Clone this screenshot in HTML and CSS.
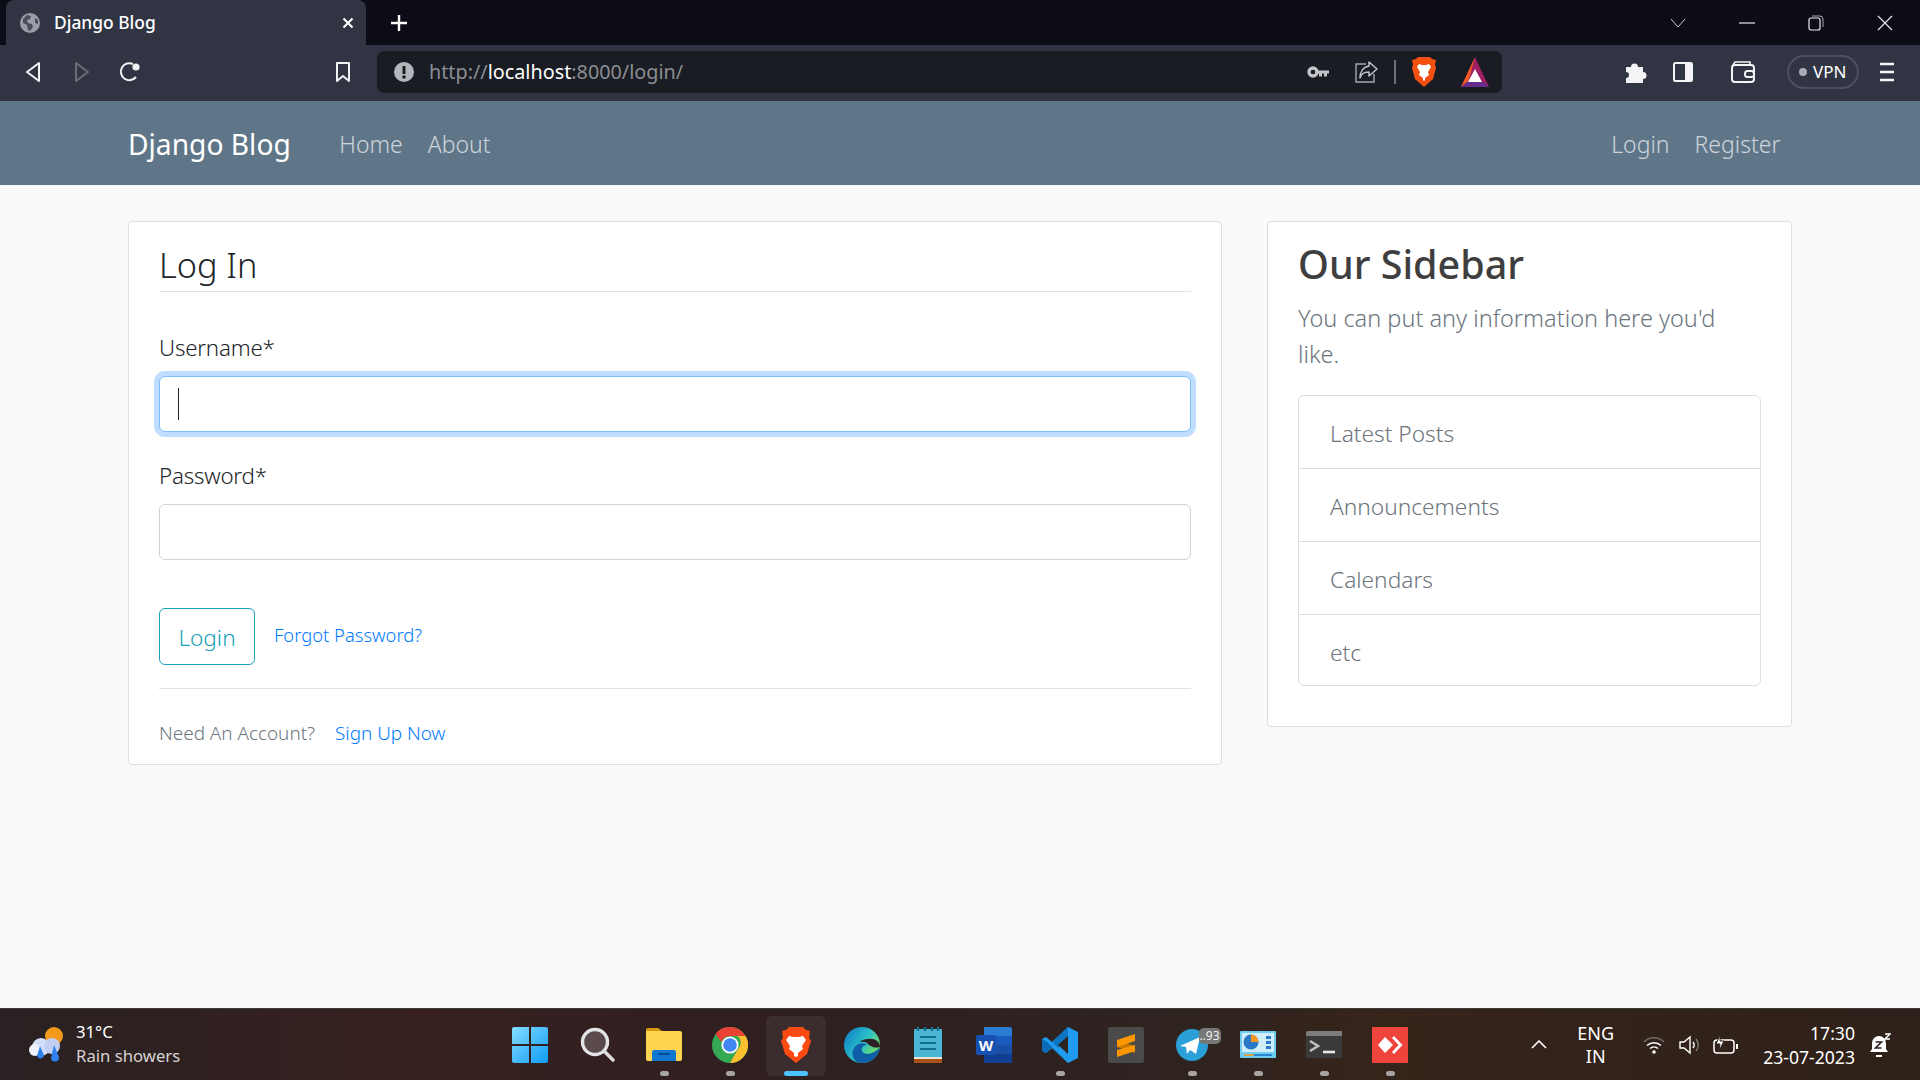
FILE: index.html
```html
<!DOCTYPE html>
<html>
<head>
<meta charset="utf-8"/>
<title>Django Blog</title>
<link rel="stylesheet" href="styles.css">
</head>
<body>

<!-- browser tab strip -->
<div class="tabstrip">
  <div class="tab">
    <svg class="favicon" width="20" height="20" viewBox="0 0 20 20"><circle cx="10" cy="10" r="10" fill="#9a9ea8"/><path d="M3 6l4-4 4 1-1 3-3 1 1 3 4 1 1 3-3 4-2-1-1-5-4-2zM15 5l3 2 0 4-3-1z" fill="#4a4e5b"/></svg>
    <span class="tab-title">Django Blog</span>
    <svg class="tab-close" width="12" height="12" viewBox="0 0 12 12"><path d="M1.5 1.5l9 9M10.5 1.5l-9 9" stroke="#fff" stroke-width="2"/></svg>
  </div>
  <svg class="tab-new" width="18" height="18" viewBox="0 0 18 18"><path d="M9 1v16M1 9h16" stroke="#fff" stroke-width="2.4"/></svg>
  <div class="win-controls">
    <svg width="16" height="10" viewBox="0 0 16 10"><path d="M1 1l7 8 7-8" fill="none" stroke="#c8c8cc" stroke-width="1"/></svg>
    <svg width="16" height="2" viewBox="0 0 16 2"><path d="M0 1h16" stroke="#e8e8ea" stroke-width="1.2"/></svg>
    <svg width="16" height="16" viewBox="0 0 16 16"><rect x="1" y="3" width="11" height="12" rx="2" fill="none" stroke="#eee" stroke-width="1.2"/><path d="M4 1h8a3 3 0 0 1 3 3v8" fill="none" stroke="#aaa" stroke-width="1"/></svg>
    <svg width="16" height="16" viewBox="0 0 16 16"><path d="M1 1l14 14M15 1L1 15" stroke="#eee" stroke-width="1.1"/></svg>
  </div>
</div>

<!-- browser toolbar -->
<div class="toolbar">
  <svg class="tb-back" width="16" height="22" viewBox="0 0 16 22"><path d="M14 2v18L2 11z" fill="none" stroke="#f2f2f4" stroke-width="2" stroke-linejoin="round"/></svg>
  <svg class="tb-fwd" width="16" height="22" viewBox="0 0 16 22"><path d="M2 2v18l12-9z" fill="none" stroke="#6a6d78" stroke-width="2" stroke-linejoin="round"/></svg>
  <svg class="tb-reload" width="22" height="24" viewBox="0 0 22 24"><path d="M17 17a8.5 8.5 0 1 1-3-13" fill="none" stroke="#f2f2f4" stroke-width="2"/><circle cx="17" cy="7" r="3.6" fill="#f2f2f4"/></svg>
  <svg class="tb-mark" width="16" height="22" viewBox="0 0 16 22"><path d="M2 2h12v18l-6-5-6 5z" fill="none" stroke="#f2f2f4" stroke-width="2" stroke-linejoin="round"/></svg>
  <div class="urlbar">
    <svg class="url-info" width="20" height="20" viewBox="0 0 20 20"><circle cx="10" cy="10" r="10" fill="#b4b6bc"/><path d="M10 4v8" stroke="#1a1c23" stroke-width="3"/><circle cx="10" cy="15" r="1.8" fill="#1a1c23"/></svg>
    <span class="url-text">http://<b>localhost</b>:8000/login/</span>
    <svg class="url-key" width="22" height="12" viewBox="0 0 22 12"><circle cx="6" cy="6" r="4" fill="none" stroke="#c4c4c8" stroke-width="3.4"/><path d="M10 4.5h12v3h-2v3h-3v-3h-2v3h-3v-3h-2z" fill="#c4c4c8"/></svg>
    <svg class="url-share" width="24" height="24" viewBox="0 0 24 24"><path d="M12 4H2v18h18v-8" fill="none" stroke="#a8a8ae" stroke-width="1.4"/><path d="M15 2l8 7-8 7v-4c-5 0-8 2-9 6 0-6 3-11 9-12z" fill="none" stroke="#c8c8cc" stroke-width="1.4" stroke-linejoin="round"/></svg>
    <span class="url-sep"></span>
    <svg class="url-brave" width="24" height="32" viewBox="0 0 24 32"><path d="M6 1h12l2 2 4 1-1 5 1 3-3 11-9 8-9-8-3-11 1-3-1-5 4-1z" fill="#f4500f"/><path d="M7 8l3 1h4l3-1 2 3-3 5 1 3-4 3v2l-1 1-1-1v-2l-4-3 1-3-3-5z" fill="#fff"/></svg>
    <svg class="url-bat" width="28" height="30" viewBox="0 0 28 30"><path d="M14 0L0 30h28z" fill="#9e1f63"/><path d="M14 0L0 30l7-4z" fill="#f15a22"/><path d="M0 30h28l-7-6H7z" fill="#662d91"/><path d="M14 12l7 13H7z" fill="#fff"/></svg>
  </div>
  <svg class="tb-puzzle" width="22" height="24" viewBox="0 0 22 24"><path d="M1 7h5a3.5 3.5 0 1 1 7 0h5v5a3.5 3.5 0 1 1 0 7v4H1v-5a3 3 0 1 0 0-6z" fill="#f4f4f6"/></svg>
  <svg class="tb-panel" width="20" height="20" viewBox="0 0 20 20"><rect x="1" y="1" width="18" height="18" rx="1.5" fill="none" stroke="#f4f4f6" stroke-width="2"/><rect x="12" y="1" width="7" height="18" fill="#f4f4f6"/></svg>
  <svg class="tb-wallet" width="24" height="24" viewBox="0 0 24 24"><rect x="1" y="5" width="22" height="17" rx="3" fill="none" stroke="#f4f4f6" stroke-width="2"/><path d="M2 5l2-3h15v3" fill="none" stroke="#f4f4f6" stroke-width="1.6"/><rect x="14" y="11" width="9" height="6" rx="2.5" fill="none" stroke="#f4f4f6" stroke-width="2"/></svg>
  <div class="vpn"><i></i>VPN</div>
  <svg class="tb-menu" width="14" height="20" viewBox="0 0 14 20"><path d="M0 2h14M0 10h14M0 18h14" stroke="#f4f4f6" stroke-width="2.4"/></svg>
</div>

<!-- site navbar -->
<nav class="navbar">
  <a class="brand">Django Blog</a>
  <a class="nav-link">Home</a>
  <a class="nav-link">About</a>
  <span class="nav-spacer"></span>
  <a class="nav-link">Login</a>
  <a class="nav-link">Register</a>
</nav>

<main class="page">
  <section class="card login">
    <h1 class="legend">Log In</h1>
    <label class="field-label">Username*</label>
    <div class="field field-focus"><span class="caret"></span></div>
    <label class="field-label">Password*</label>
    <div class="field"></div>
    <div class="actions">
      <button class="btn-login">Login</button>
      <a class="link-forgot">Forgot Password?</a>
    </div>
    <div class="signup">
      <span>Need An Account?</span>
      <a class="link-signup">Sign Up Now</a>
    </div>
  </section>

  <aside class="card sidebar">
    <h3 class="side-title">Our Sidebar</h3>
    <p class="side-text">You can put any information here you'd like.</p>
    <ul class="side-list">
      <li>Latest Posts</li>
      <li>Announcements</li>
      <li>Calendars</li>
      <li>etc</li>
    </ul>
  </aside>
</main>

<!-- windows taskbar -->
<footer class="taskbar">
  <div class="tb-left">
    <svg class="weather-icon" width="38" height="38" viewBox="0 0 38 38"><circle cx="26" cy="10" r="9" fill="#f39a1e"/><circle cx="13" cy="21" r="9" fill="#d5def8"/><circle cx="24" cy="20" r="8" fill="#c2cff2"/><circle cx="7" cy="24" r="6" fill="#eef1fb"/><path d="M12 20l4 9a3.6 3.6 0 0 1-7 1z" fill="#2f80ed"/><path d="M26 19l5 12a4 4 0 0 1-8 1z" fill="#2f80ed"/></svg>
    <div class="weather-text">
      <div class="weather-temp">31°C</div>
      <div class="weather-desc">Rain showers</div>
    </div>
  </div>

  <div class="tb-apps">
    <div class="app">
      <svg class="start-icon" width="36" height="36" viewBox="0 0 36 36"><defs><linearGradient id="win" x1="0" y1="0" x2="1" y2="1"><stop offset="0" stop-color="#86dcff"/><stop offset="1" stop-color="#0d9cf5"/></linearGradient></defs><path d="M0 2a2 2 0 0 1 2-2h15v17H0zM19 0h15a2 2 0 0 1 2 2v15H19zM0 19h17v17H2a2 2 0 0 1-2-2zM19 19h17v15a2 2 0 0 1-2 2H19z" fill="url(#win)"/></svg>
    </div>
    <div class="app">
      <svg width="36" height="36" viewBox="0 0 36 36"><circle cx="15" cy="15" r="12.5" fill="#5a4a4c" stroke="#e4e4e6" stroke-width="3.4"/><path d="M24 24l9 9" stroke="#dcdcde" stroke-width="3.6" stroke-linecap="round"/></svg>
    </div>
    <div class="app dot">
      <svg width="36" height="36" viewBox="0 0 36 36"><path d="M0 3a2 2 0 0 1 2-2h10l4 3h-16z" fill="#d99a0c"/><path d="M0 4h34a2 2 0 0 1 2 2v26a2 2 0 0 1-2 2H2a2 2 0 0 1-2-2z" fill="#fcd44f"/><path d="M6 34h24V25a2 2 0 0 0-2-2H8a2 2 0 0 0-2 2z" fill="#0f78d4"/><path d="M12 27h12" stroke="#0a4f8f" stroke-width="2"/></svg>
    </div>
    <div class="app dot">
      <svg width="36" height="36" viewBox="0 0 36 36"><circle cx="18" cy="18" r="18" fill="#34a853"/><path d="M18 0a18 18 0 0 1 15.6 9H18a9 9 0 0 0-8.6 6L3.4 7A18 18 0 0 1 18 0z" fill="#ea4335"/><path d="M33.6 9A18 18 0 0 1 18 36l7.8-13.5a9 9 0 0 0 0-13.5z" fill="#fbc02d"/><circle cx="18" cy="18" r="8.6" fill="#fff"/><circle cx="18" cy="18" r="6.8" fill="#4285f4"/></svg>
    </div>
    <div class="app active">
      <svg width="30" height="36" viewBox="0 0 30 36"><path d="M8 0h14l3 3 4 1-1 7 2 3-4 13-11 9-11-9-4-13 2-3-1-7 4-1z" fill="#fb4a12"/><path d="M8 9l4 1h6l4-1 3 4-4 6 1 3-5 4v3l-2 1-2-1v-3l-5-4 1-3-4-6z" fill="#fff"/></svg>
    </div>
    <div class="app">
      <svg width="36" height="36" viewBox="0 0 36 36"><defs><linearGradient id="edge" x1="0" y1="0" x2="1" y2="0.6"><stop offset="0" stop-color="#0c78c8"/><stop offset="0.6" stop-color="#2bc1c8"/><stop offset="1" stop-color="#7ce05a"/></linearGradient></defs><circle cx="18" cy="18" r="18" fill="url(#edge)"/><path d="M36 20c-1 9-8 16-18 16C10 36 6 28 10 21c3-5 10-6 13-3-4 0-6 3-5 6 2 4 10 5 18-4z" fill="#0f5ea8"/><path d="M36 20c0-6-6-9-12-8-6 0-8 3-8 3 4-1 7 0 9 3 0 0 5 4 11 2z" fill="#2c2024"/></svg>
    </div>
    <div class="app">
      <svg width="28" height="36" viewBox="0 0 28 36"><rect x="0" y="2" width="28" height="34" rx="1" fill="#4db6d4"/><path d="M0 32h28v3a1 1 0 0 1-1 1H1a1 1 0 0 1-1-1z" fill="#a8521a"/><path d="M0 30h28v2H0z" fill="#e8e4d8"/><path d="M6 10h16M6 16h16M6 22h16" stroke="#12708f" stroke-width="2"/><path d="M4 0v4M11 0v4M18 0v4M24 0v4" stroke="#12708f" stroke-width="2.4"/></svg>
    </div>
    <div class="app">
      <svg width="36" height="36" viewBox="0 0 36 36"><path d="M8 0h26a2 2 0 0 1 2 2v32a2 2 0 0 1-2 2H8z" fill="#2b7cd3"/><path d="M8 9h28v9H8z" fill="#185abd"/><path d="M8 18h28v9H8z" fill="#1a4fa8"/><path d="M8 27h28v7a2 2 0 0 1-2 2H8z" fill="#103f91"/><rect x="0" y="8" width="20" height="20" rx="2" fill="#1650b0"/><text class="word-w" x="10" y="23.5" text-anchor="middle">W</text></svg>
    </div>
    <div class="app dot">
      <svg width="36" height="36" viewBox="0 0 36 36"><path d="M26 0l10 5v26l-10 5-16-15-6 5-4-2V12l4-2 6 5z" fill="#1f9cf0"/><path d="M26 0L10 15l6 6L26 9z" fill="#0e75c2"/><path d="M26 36L4 14l-4-2v12l4 2 6-5 16 15z" fill="#0c6bb8"/><path d="M26 9v18l-10-9z" fill="#2c2420"/></svg>
    </div>
    <div class="app">
      <svg width="36" height="36" viewBox="0 0 36 36"><rect width="36" height="36" rx="2" fill="#4a4a4a"/><path d="M9 13l18 6v7L9 20z" fill="#c97a05"/><path d="M9 13l18-6v7L9 20z" fill="#ff9800"/><path d="M9 23l18-5v6L9 30z" fill="#ff9800"/></svg>
    </div>
    <div class="app dot">
      <svg width="36" height="36" viewBox="0 0 36 36"><circle cx="18" cy="18" r="16" fill="#2a9fd8"/><path d="M6 19l20-9-4 17-6-4-3 4-1-7z" fill="#fff"/></svg>
      <span class="badge">..93</span>
    </div>
    <div class="app dot">
      <svg width="36" height="28" viewBox="0 0 36 28"><rect width="36" height="27" rx="1" fill="#6ecdf0"/><rect x="2" y="2" width="32" height="19" fill="#cdeefa"/><circle cx="11" cy="11" r="7.5" fill="#2b78c8"/><path d="M11 3.5a7.5 7.5 0 0 1 7.5 7.5H11z" fill="#f59a1f"/><rect x="26" y="5" width="5" height="3" fill="#2b78c8"/><rect x="26" y="10" width="5" height="3" fill="#2b78c8"/><rect x="26" y="15" width="5" height="3" fill="#2b78c8"/><path d="M4 24h10" stroke="#f59a1f" stroke-width="1.6"/><path d="M14 24h18" stroke="#1a73c8" stroke-width="1.6"/></svg>
    </div>
    <div class="app dot">
      <svg width="36" height="28" viewBox="0 0 36 28"><rect width="36" height="27" rx="2" fill="#3a3a3a"/><path d="M0 2a2 2 0 0 1 2-2h34v5H0z" fill="#7c7c7c"/><path d="M4 10l8 5-8 5" fill="none" stroke="#c0c0c0" stroke-width="2.6"/><path d="M17 21h12" stroke="#e8e8e8" stroke-width="2.6"/></svg>
    </div>
    <div class="app dot">
      <svg width="36" height="36" viewBox="0 0 36 36"><rect width="36" height="36" fill="#ef443b"/><path d="M13 10l8 8-8 8-7-8z" fill="#fff"/><path d="M22 9l8.5 9-8.5 9-2-2 6.5-7-6.5-7z" fill="#fff"/></svg>
    </div>
  </div>

  <div class="tb-right">
    <svg class="tray-up" width="16" height="9" viewBox="0 0 16 9"><path d="M1 8l7-7 7 7" fill="none" stroke="#fff" stroke-width="1.6"/></svg>
    <div class="tray-lang">ENG<br>IN</div>
    <svg class="tray-wifi" width="22" height="18" viewBox="0 0 22 18"><path d="M1 6a14 14 0 0 1 20 0" fill="none" stroke="#6f6a66" stroke-width="1.5"/><path d="M4 9.5a10 10 0 0 1 14 0M7 12.5a6 6 0 0 1 8 0" fill="none" stroke="#fff" stroke-width="1.5"/><circle cx="11" cy="16" r="1.8" fill="#fff"/></svg>
    <svg class="tray-vol" width="24" height="20" viewBox="0 0 24 20"><path d="M1 7h4l6-5v16l-6-5H1z" fill="none" stroke="#fff" stroke-width="1.4"/><path d="M14 7a5 5 0 0 1 0 6" fill="none" stroke="#fff" stroke-width="1.4"/><path d="M17 4a9 9 0 0 1 0 12" fill="none" stroke="#888" stroke-width="1.2"/></svg>
    <svg class="tray-batt" width="26" height="20" viewBox="0 0 26 20"><rect x="1" y="5" width="20" height="13" rx="3" fill="none" stroke="#fff" stroke-width="1.5"/><path d="M23 9h2v5h-2z" fill="#fff"/><path d="M7 0L3 9h4l-1 7 5-10H7z" fill="#fff" stroke="#2c2018" stroke-width="1"/></svg>
    <div class="tray-clock">17:30<br>23-07-2023</div>
    <svg class="tray-bell" width="22" height="26" viewBox="0 0 22 26"><path d="M10 4a7 7 0 0 1 7 7v6l2 3H1l2-3v-6a7 7 0 0 1 7-7z" fill="#fff"/><path d="M7 24h6" stroke="#fff" stroke-width="2"/><path d="M6.5 10h6l-6 6h6" fill="none" stroke="#2c2020" stroke-width="1.6"/><path d="M16 2h5l-5 5h5" fill="none" stroke="#fff" stroke-width="1.5"/></svg>
  </div>
</footer>

</body>
</html>
```

FILE: styles.css
```css
* {
  box-sizing: border-box;
}

html, body {
  margin: 0;
  height: 100%;
}

body {
  display: flex;
  flex-direction: column;
  height: 1080px;
  overflow: hidden;
  font-family: "Noto Sans", "Open Sans", sans-serif;
  font-size: 22.3px;
  font-weight: 350;
  line-height: 36px;
  color: #212529;
  background-color: #fafafa;
}

svg {
  display: block;
  flex: none;
}

/* tab strip */
.tabstrip {
  display: flex;
  align-items: center;
  height: 45px;
  padding-left: 6px;
  background-color: #0b0c16;
  color: #fff;
}

.tab {
  display: flex;
  align-items: center;
  width: 360px;
  height: 45px;
  padding: 0 8px 0 14px;
  background-color: #313543;
  border-radius: 8px 8px 0 0;
}

.tab-title {
  margin-left: 14px;
  font-size: 17.4px;
  font-weight: 500;
  line-height: 45px;
}

.tab-close {
  margin-left: auto;
  margin-right: 4px;
}

.tab-new {
  margin-left: 24px;
}

.win-controls {
  display: flex;
  align-items: center;
  gap: 53px;
  margin-left: auto;
  padding-right: 27px;
}

/* toolbar */
.toolbar {
  display: flex;
  align-items: center;
  height: 56px;
  padding-bottom: 2px;
  background-color: #313543;
}

.tb-back {
  margin-left: 25px;
}

.tb-fwd {
  margin-left: 33px;
}

.tb-reload {
  margin-left: 29px;
}

.tb-mark {
  margin-left: 194px;
}

.urlbar {
  display: flex;
  align-items: center;
  width: 1125px;
  height: 42px;
  margin-left: 26px;
  padding: 0 13px 0 17px;
  background-color: #1a1c23;
  border-radius: 7px;
}

.url-text {
  margin-left: 15px;
  font-size: 19.8px;
  font-weight: 400;
  line-height: 42px;
  color: #8b8d94;
}

.url-text b {
  font-weight: 400;
  color: #fff;
}

.url-key {
  margin-left: auto;
}

.url-share {
  margin-left: 25px;
}

.url-sep {
  width: 2px;
  height: 24px;
  margin-left: 16px;
  background-color: #6e7076;
}

.url-brave {
  margin-left: 16px;
}

.url-bat {
  margin-left: 25px;
}

.tb-puzzle {
  margin-left: 123px;
}

.tb-panel {
  margin-left: 26px;
}

.tb-wallet {
  margin-left: 38px;
}

.vpn {
  display: flex;
  align-items: center;
  gap: 6px;
  width: 72px;
  height: 34px;
  margin-left: 32px;
  padding-left: 10px;
  border: 2px solid #4c5060;
  border-radius: 17px;
  font-size: 17px;
  font-weight: 400;
  color: #fff;
}

.vpn i {
  width: 8px;
  height: 8px;
  background-color: #a9acb6;
  border-radius: 50%;
}

.tb-menu {
  margin-left: 21px;
}

/* navbar */
.navbar {
  display: flex;
  align-items: center;
  height: 84px;
  padding: 2px 127px 0 128px;
  background-color: #5f7689;
}

.brand {
  margin-right: 36px;
  font-size: 28.2px;
  font-weight: 400;
  color: #fff;
}

.nav-link {
  margin: 0 12.5px;
  font-size: 23px;
  color: rgba(255, 255, 255, .7);
}

.nav-spacer {
  flex: 1;
}

/* page content */
.page {
  display: grid;
  flex: 1;
  grid-template-columns: 1094px 525px;
  column-gap: 45px;
  align-items: start;
  padding: 36px 128px 0;
}

.card {
  background-color: #fff;
  border: 1px solid #dedede;
  border-radius: 4px;
}

.login {
  height: 544px;
  padding: 15px 30px;
}

.legend {
  height: 55px;
  margin: 0 0 38px;
  border-bottom: 1px solid #dee2e6;
  font-size: 34.3px;
  font-weight: 300;
  line-height: 56px;
}

.field-label {
  display: block;
  margin-bottom: 10px;
  letter-spacing: -.2px;
}

.field {
  display: flex;
  align-items: center;
  height: 56px;
  margin-bottom: 26px;
  padding-left: 18px;
  background-color: #fff;
  border: 1px solid #ced4da;
  border-radius: 6px;
}

.field-focus {
  border-color: #80bdff;
  box-shadow: 0 0 0 5px rgba(0, 123, 255, .25);
}

.caret {
  width: 1px;
  height: 32px;
  background-color: #212529;
}

.actions {
  display: flex;
  align-items: center;
  padding-top: 22px;
}

.btn-login {
  width: 96px;
  height: 57px;
  padding: 2px 0 0;
  background: none;
  border: 1px solid #17a2b8;
  border-radius: 6px;
  font-family: inherit;
  font-size: 22.6px;
  font-weight: 350;
  color: #17a2b8;
}

.link-forgot {
  margin: -4px 0 0 19px;
  font-size: 18.4px;
  color: #007bff;
}

.signup {
  margin-top: 23px;
  padding-top: 26px;
  border-top: 1px solid #dee2e6;
  font-size: 18.9px;
  color: #6c757d;
}

.link-signup {
  margin-left: 15px;
  color: #007bff;
}

.sidebar {
  height: 506px;
  padding: 15px 30px;
}

.side-title {
  margin: 0 0 9px;
  font-size: 39.5px;
  font-weight: 500;
  line-height: 54px;
  color: #3e3e3e;
}

.side-text {
  max-width: 445px;
  margin: 0 0 23px;
  font-size: 23.5px;
  color: #6c757d;
}

.side-list {
  margin: 0;
  padding: 0;
  list-style: none;
  border: 1px solid #dedede;
  border-radius: 6px;
}

.side-list li {
  height: 73px;
  padding: 0 31px;
  border-bottom: 1px solid #dedede;
  font-size: 22.7px;
  line-height: 76px;
  color: #6c757d;
}

.side-list li:last-child {
  height: 70px;
  border-bottom: none;
}

/* taskbar */
.taskbar {
  display: flex;
  align-items: center;
  height: 72px;
  background: linear-gradient(90deg, #2a2122 0%, #37201f 22%, #2f1f21 40%, #2e2320 60%, #35241a 72%, #2e2119 100%);
  border-top: 1px solid #3d3a3a;
  font-weight: 400;
  color: #fff;
}

.tb-left {
  display: flex;
  flex: 1;
  align-items: center;
  padding-left: 28px;
}

.weather-text {
  margin: 0 0 2px 10px;
  font-size: 16.7px;
  line-height: 24px;
}

.weather-desc {
  color: #d6d3d2;
}

.tb-apps {
  display: flex;
  padding-left: 2px;
}

.start-icon {
  margin-left: -3px;
}

.app {
  position: relative;
  display: flex;
  align-items: center;
  justify-content: center;
  width: 66px;
  height: 70px;
}

.dot::after,
.active::after {
  content: "";
  position: absolute;
  bottom: 4px;
  left: 29px;
  width: 9px;
  height: 5px;
  background-color: #a8a5a4;
  border-radius: 3px;
}

.active::before {
  content: "";
  position: absolute;
  top: 6px;
  left: 3px;
  width: 60px;
  height: 60px;
  background-color: rgba(255, 255, 255, .06);
  border-radius: 6px;
}

.active::after {
  left: 21px;
  width: 24px;
  background-color: #4cc2ff;
}

.active svg {
  position: relative;
}

.badge {
  position: absolute;
  top: 18px;
  right: 4px;
  width: 22px;
  height: 16px;
  background-color: #777;
  border-radius: 5px;
  font-size: 12px;
  line-height: 16px;
  text-align: center;
  color: #eee;
}

.word-w {
  font-family: "Noto Sans", sans-serif;
  font-size: 15px;
  font-weight: 700;
  fill: #fff;
}

.tb-right {
  display: flex;
  flex: 1;
  align-items: center;
  justify-content: flex-end;
  padding-right: 29px;
}

.tray-lang {
  margin-left: 30px;
  font-size: 18px;
  line-height: 23px;
  text-align: center;
}

.tray-wifi {
  margin-left: 29px;
}

.tray-vol {
  margin-left: 14px;
}

.tray-batt {
  margin-left: 10px;
}

.tray-clock {
  margin-left: 24px;
  font-size: 17.6px;
  line-height: 24px;
  text-align: right;
}

.tray-bell {
  margin-left: 14px;
}
```
